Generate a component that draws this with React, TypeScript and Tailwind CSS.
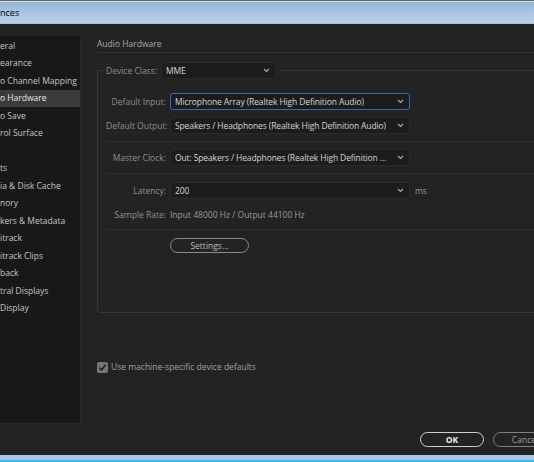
import React from "react";

const font = { fontFamily: '"Open Sans", "Noto Sans", sans-serif' };

function Chevron() {
  return (
    <svg width="7" height="5" viewBox="0 0 7 5" className="shrink-0">
      <polyline points="1,1 3.5,3.5 6,1" fill="none" stroke="#a8a8a8" strokeWidth="1.2" />
    </svg>
  );
}

function Dropdown({ value, focused = false, w = "w-[240px]" }: { value: string; focused?: boolean; w?: string }) {
  return (
    <div
      className={`${w} h-[17px] flex items-center justify-between pl-[4px] pr-[5px] rounded-[3px] bg-[#1c1c1c] border ${
        focused ? "border-[#2c6cb8]" : "border-[#2a2a2a]"
      }`}
    >
      <span className="text-[#d4d4d4] whitespace-nowrap overflow-hidden tracking-[-0.12px]">{value}</span>
      <Chevron />
    </div>
  );
}

function Row({ label, children, className = "" }: { label: string; children: React.ReactNode; className?: string }) {
  return (
    <div className={`flex items-center ${className}`}>
      <div className="w-[60px] text-right text-[#8e8e8e] whitespace-nowrap">{label}</div>
      <div className="ml-[4px] flex items-center">{children}</div>
    </div>
  );
}

const items = [
  "eral",
  "earance",
  "o Channel Mapping",
  "o Hardware",
  "o Save",
  "rol Surface",
  "",
  "ts",
  "ia & Disk Cache",
  "nory",
  "kers & Metadata",
  "itrack",
  "itrack Clips",
  "back",
  "tral Displays",
  "Display",
];

export default function App() {
  return (
    <div className="w-[534px] h-[462px] overflow-hidden bg-[#232323] text-[8.5px] leading-[12px]" style={font}>
      <div className="w-[580px] h-full flex flex-col">
        {/* title bar */}
        <div className="h-[1px] bg-[#6a6a6a]" />
        <div className="h-[1px] bg-[#c9dbee]" />
        <div className="h-[22px] flex items-center bg-gradient-to-b from-[#98b7d6] to-[#bad2ec] border-b border-[#a9c2dc]">
          <span className="text-[9px] text-black">nces</span>
        </div>

        {/* body */}
        <div className="flex-1 flex flex-col">
          <div className="h-[400px] flex">
            {/* sidebar */}
            <div className="w-[81px] mt-[12px] h-[388px] bg-[#181818] border-r border-b border-[#2a2a2a] pt-[1px]">
              {items.map((t, i) => (
                <div
                  key={i}
                  className={`h-[17.5px] flex items-center whitespace-nowrap ${
                    i === 3 ? "bg-[#3b3b3b] text-[#e6e6e6]" : "text-[#c4c4c4]"
                  }`}
                >
                  {t}
                </div>
              ))}
            </div>

            {/* main */}
            <div className="flex-1 pl-[16px] pt-[14px] flex flex-col">
              <div className="text-[#a8a8a8] h-[12px] flex items-center">Audio Hardware</div>
              <div className="mt-[2px] h-[1px] bg-[#303030]" />

              <fieldset className="mt-[9px] w-[470px] h-[251px] border border-[#363636] rounded-[3px] pl-[6px]">
                <legend className="px-[2px]">
                  <div className="flex items-center">
                    <span className="text-[#8e8e8e]">Device Class:</span>
                    <div className="ml-[4px]">
                      <Dropdown value="MME" w="w-[115px]" />
                    </div>
                  </div>
                </legend>
                <div className="pl-[2px]">
                  <Row label="Default Input:" className="mt-[14px]">
                    <Dropdown value="Microphone Array (Realtek High Definition Audio)" focused />
                  </Row>
                  <Row label="Default Output:" className="mt-[7px]">
                    <Dropdown value="Speakers / Headphones (Realtek High Definition Audio)" />
                  </Row>
                  <div className="mt-[7px] h-[1px] bg-[#303030]" />
                  <Row label="Master Clock:" className="mt-[7px]">
                    <Dropdown value="Out: Speakers / Headphones (Realtek High Definition ..." />
                  </Row>
                  <div className="mt-[7px] h-[1px] bg-[#303030]" />
                  <Row label="Latency:" className="mt-[8px]">
                    <Dropdown value="200" />
                    <span className="ml-[5px] text-[#9a9a9a]">ms</span>
                  </Row>
                  <Row label="Sample Rate:" className="mt-[10px]">
                    <span className="text-[#9a9a9a] whitespace-nowrap">Input 48000 Hz / Output 44100 Hz</span>
                  </Row>
                  <div className="mt-[8px] h-[1px] bg-[#303030]" />
                  <div className="mt-[8px] pl-[64px]">
                    <div className="w-[79px] h-[15px] rounded-full border-[1.5px] border-[#8a8a8a] flex items-center justify-center text-[#bcbcbc]">
                      Settings...
                    </div>
                  </div>
                </div>
              </fieldset>

              <div className="mt-[48px] flex items-center">
                <div className="w-[11px] h-[11px] rounded-[2px] bg-[#767676] flex items-center justify-center">
                  <svg width="9" height="9" viewBox="0 0 9 9">
                    <polyline points="1.5,4.8 3.6,7 7.6,1.8" fill="none" stroke="#1e1e1e" strokeWidth="1.6" />
                  </svg>
                </div>
                <span className="ml-[3px] text-[#a0a0a0]">Use machine-specific device defaults</span>
              </div>
            </div>
          </div>

          {/* footer */}
          <div className="mt-[8px] flex justify-end pr-[23px] gap-[9px]">
            <div className="w-[64px] h-[15px] rounded-full border-[1.5px] border-[#d0d0d0] flex items-center justify-center text-[#ececec] font-bold">
              OK
            </div>
            <div className="w-[64px] h-[15px] rounded-full border-[1.5px] border-[#808080] flex items-center justify-center text-[#9a9a9a]">
              Cancel
            </div>
          </div>
          <div className="flex-1" />
        </div>

        <div className="h-[5px] bg-[#aac8e7]" />
        <div className="h-[2px] bg-[#38bbe2]" />
      </div>
    </div>
  );
}
